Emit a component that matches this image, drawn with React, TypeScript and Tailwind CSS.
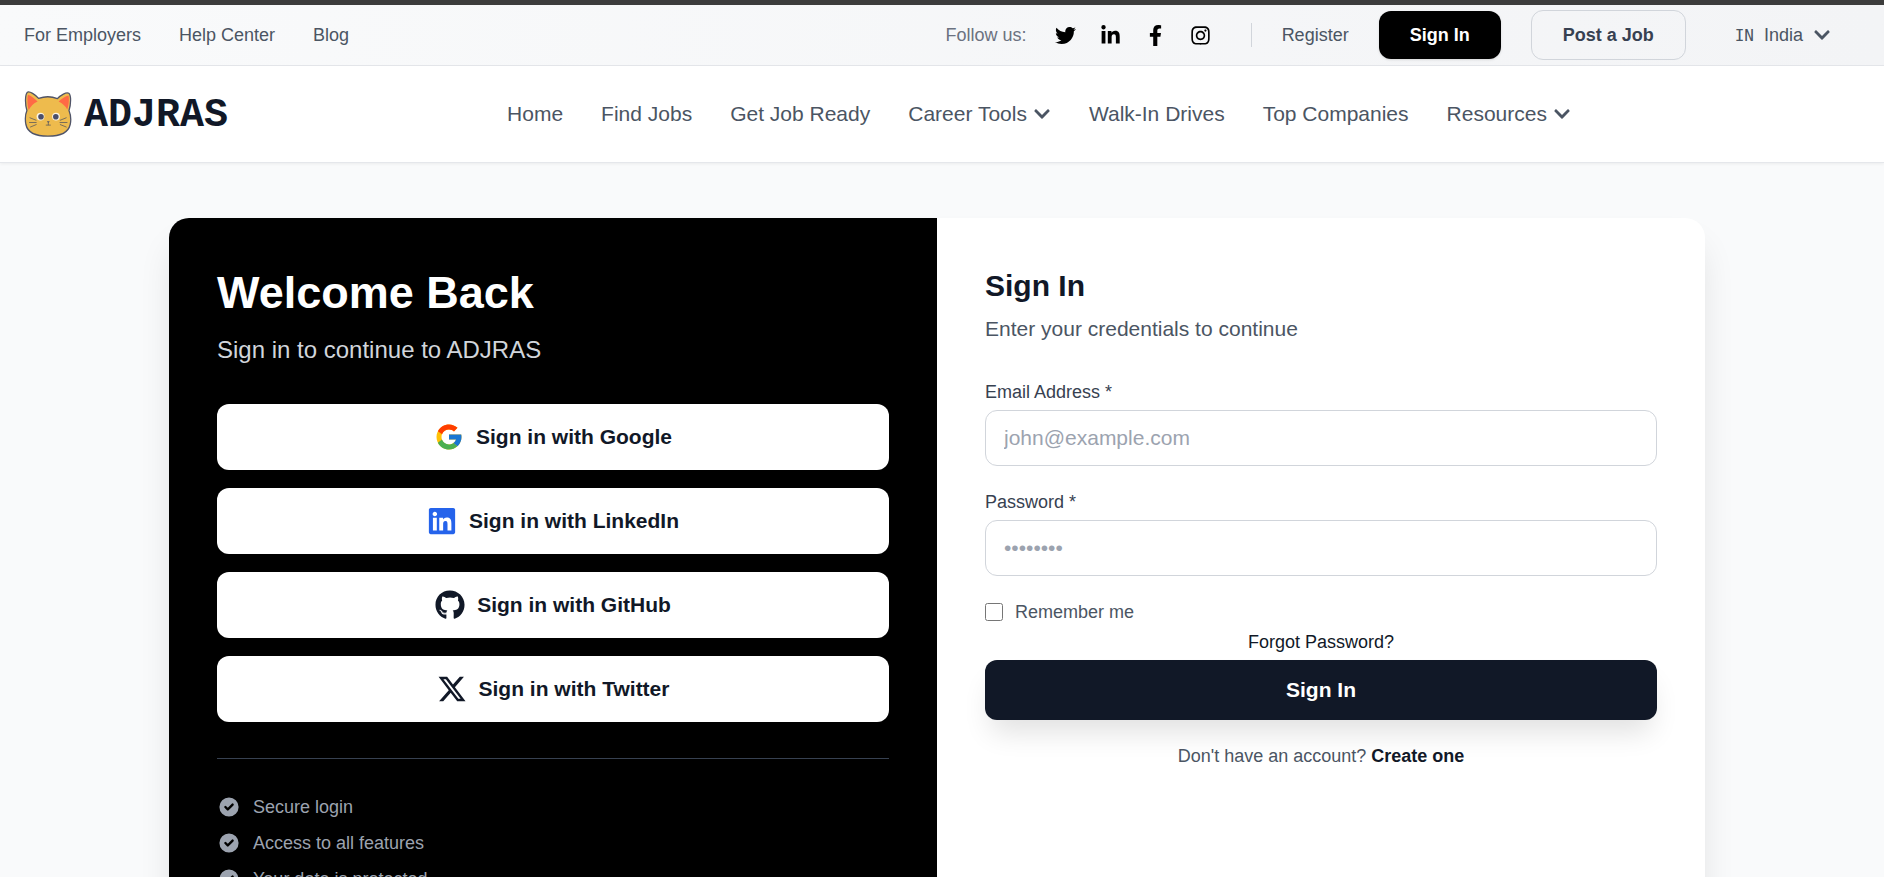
import React from "react";
import {
  FaChevronDown,
  FaFacebookF,
  FaGithub,
  FaInstagram,
  FaLinkedin,
  FaLinkedinIn,
  FaTwitter,
} from "react-icons/fa";
import { FaXTwitter } from "react-icons/fa6";
import { FcGoogle } from "react-icons/fc";
import { HiCheckCircle } from "react-icons/hi";

const topLinks = ["For Employers", "Help Center", "Blog"];

const socials = [
  { label: "Twitter", Icon: FaTwitter },
  { label: "LinkedIn", Icon: FaLinkedinIn },
  { label: "Facebook", Icon: FaFacebookF },
  { label: "Instagram", Icon: FaInstagram },
];

const navItems = [
  { label: "Home" },
  { label: "Find Jobs" },
  { label: "Get Job Ready" },
  { label: "Career Tools", menu: true },
  { label: "Walk-In Drives" },
  { label: "Top Companies" },
  { label: "Resources", menu: true },
];

const providers = [
  { name: "Google", icon: <FcGoogle size={30} /> },
  { name: "LinkedIn", icon: <FaLinkedin size={30} className="text-[#2563eb]" /> },
  { name: "GitHub", icon: <FaGithub size={30} /> },
  { name: "Twitter", icon: <FaXTwitter size={30} /> },
];

const perks = ["Secure login", "Access to all features", "Your data is protected"];

function CatLogo() {
  return (
    <svg viewBox="0 0 48 48" className="size-12" aria-hidden="true">
      <path
        d="M3.4 2.2C5.4.6 11.500 4.800 14.600 8.400C20.500 6.300 27.500 6.300 33.400 8.600C36.500 5.200 42.500 1.700 44.800 3.300C47.300 5.200 47 14.500 45 20.500C46.600 24.500 47.200 30 46.200 34.500C44.300 43 34.500 46.200 24 46.200C13.500 46.200 3.700 43 1.900 34.500C1 29.500 1.200 24.500 2.900 20.500C1 14.500.9 4.500 3.400 2.200Z"
        fill="#eebb4d"
        stroke="#505468"
        strokeWidth="1.300"
        strokeLinejoin="round"
      />
      <path d="M4 4.800C7 5.600 11 8.800 13.600 11.600C9.500 13.500 6.600 16.500 4.700 20C3.300 15.500 3 8 4 4.800Z" fill="#ff6a45" />
      <path d="M44.500 5.600C41.500 6.300 37.500 8.800 34.600 11.600C38.500 13.500 41.400 16.200 43.300 19.600C44.900 15.500 45.300 8.800 44.500 5.600Z" fill="#ff6a45" />
      <circle cx="16.500" cy="26.600" r="3.900" fill="#fbf4e4" />
      <circle cx="32" cy="26.600" r="3.900" fill="#fbf4e4" />
      <circle cx="17" cy="26.700" r="2.800" fill="#4a4e6b" />
      <circle cx="31.800" cy="26.700" r="2.800" fill="#4a4e6b" />
      <path d="M22.800 31.200H25.800L24.300 33Z" fill="#505468" />
      <path
        d="M24.300 32.500V34.800M22.200 35.100H26.400M6 27.800L12 30.200M5.500 32.500H12.200M6.500 37L12.200 34.600M42.200 27.800L36.300 30.200M43 32.500H36M42.200 37L36.300 34.600"
        fill="none"
        stroke="#5d5b5c"
        strokeWidth="0.800"
        strokeLinecap="round"
      />
    </svg>
  );
}

function TopBar() {
  return (
    <div className="flex h-[61px] items-center justify-between border-b border-[#e5e7eb] bg-gradient-to-r from-[#f9fafb] to-[#f3f4f6] pr-[34px] pl-6 text-lg leading-6 text-[#4b5563]">
      <div className="flex items-center gap-[38px]">
        {topLinks.map((label) => (
          <a key={label} href="#">
            {label}
          </a>
        ))}
      </div>
      <div className="flex items-center gap-[30px]">
        <div className="flex items-center gap-6 pr-2.5">
          <span className="pr-1 text-[#6b7280]">Follow us:</span>
          {socials.map(({ label, Icon }) => (
            <a key={label} href="#" aria-label={label} className="text-black">
              <Icon size={21} />
            </a>
          ))}
        </div>
        <div className="h-6 w-px bg-[#d1d5db]" />
        <a href="#">Register</a>
        <button className="h-12 rounded-xl bg-black px-[31px] font-bold text-white shadow-sm">Sign In</button>
        <button className="h-[50px] rounded-xl border border-[#d1d5db] px-[31px] font-bold text-[#374151]">
          Post a Job
        </button>
        <button className="flex items-center gap-2.5 px-[19px]">
          <span className="pt-0.5 font-['DejaVu_Sans_Mono',monospace] text-base">IN</span>
          <span>India</span>
          <FaChevronDown size={18} />
        </button>
      </div>
    </div>
  );
}

function Header() {
  return (
    <header className="flex h-[97px] items-center justify-between border-b border-[#e5e7eb] bg-white pr-[34px] pl-6 shadow-[0_1px_3px_rgba(0,0,0,0.06)]">
      <a href="#" className="flex items-center gap-3">
        <CatLogo />
        <span className="pt-1 font-['Liberation_Mono',monospace] text-[40px] leading-12 font-bold text-[#111827]">
          ADJRAS
        </span>
      </a>
      <nav className="flex items-center gap-[38px] text-[21px] leading-7 text-[#4b5563]">
        {navItems.map(({ label, menu }) => (
          <a key={label} href="#" className="flex items-center gap-1.5">
            {label}
            {menu && <FaChevronDown size={18} />}
          </a>
        ))}
      </nav>
      <div />
    </header>
  );
}

function WelcomePanel() {
  return (
    <section className="bg-black p-12 text-white">
      <h1 className="text-[45px] leading-[54px] font-bold">Welcome Back</h1>
      <p className="mt-3 text-2xl leading-9 text-[#d1d5db]">Sign in to continue to ADJRAS</p>
      <div className="mt-9 flex flex-col gap-[18px]">
        {providers.map(({ name, icon }) => (
          <button
            key={name}
            className="flex h-[66px] items-center justify-center gap-3 rounded-xl bg-white text-[21px] font-bold text-[#111827]"
          >
            {icon}
            Sign in with {name}
          </button>
        ))}
      </div>
      <ul className="mt-9 flex flex-col gap-3 border-t border-[#374151] pt-9 text-lg leading-6 text-[#9ca3af]">
        {perks.map((perk) => (
          <li key={perk} className="flex items-center gap-3">
            <HiCheckCircle size={24} />
            {perk}
          </li>
        ))}
      </ul>
    </section>
  );
}

function SignInForm() {
  const field =
    "mt-1.5 h-14 w-full rounded-xl border border-[#d1d5db] px-[18px] text-[21px] leading-7 text-[#111827] placeholder:text-[#9ca3af]";
  return (
    <section className="bg-white p-12">
      <h2 className="text-3xl leading-10 font-bold text-[#111827]">Sign In</h2>
      <p className="mt-2 text-[21px] leading-[30px] text-[#4b5563]">Enter your credentials to continue</p>
      <form className="mt-9 text-lg leading-6" onSubmit={(e) => e.preventDefault()}>
        <label htmlFor="email" className="block text-[#374151]">
          Email Address *
        </label>
        <input id="email" type="email" placeholder="john@example.com" className={field} />
        <label htmlFor="password" className="mt-6 block text-[#374151]">
          Password *
        </label>
        <input id="password" type="password" placeholder="••••••••" className={field} />
        <label className="mt-6 flex items-center gap-3 text-[#4b5563]">
          <input type="checkbox" className="size-[18px]" />
          Remember me
        </label>
        <a href="#" className="mx-auto mt-1.5 block w-fit text-[#111827]">
          Forgot Password?
        </a>
        <button
          type="submit"
          className="mt-1.5 block h-[60px] w-full rounded-xl bg-[#111827] text-[21px] font-bold text-white shadow-[0_18px_28px_-6px_rgba(0,0,0,0.12)]"
        >
          Sign In
        </button>
        <p className="mt-6 text-center text-[#4b5563]">
          Don't have an account?{" "}
          <a href="#" className="font-bold text-[#111827]">
            Create one
          </a>
        </p>
      </form>
    </section>
  );
}

export default function App() {
  return (
    <div className="h-screen overflow-y-auto bg-[#f9fafb] font-['Liberation_Sans',Arial,sans-serif] [scrollbar-width:none]">
      <div className="h-[5px] bg-[#3c3c3c]" />
      <TopBar />
      <Header />
      <main className="pt-[55px] pr-[10px] pb-14">
        <div className="mx-auto grid max-w-[1536px] grid-cols-2 overflow-hidden rounded-[20px] shadow-[0_24px_36px_-6px_rgba(0,0,0,0.12)]">
          <WelcomePanel />
          <SignInForm />
        </div>
      </main>
    </div>
  );
}
